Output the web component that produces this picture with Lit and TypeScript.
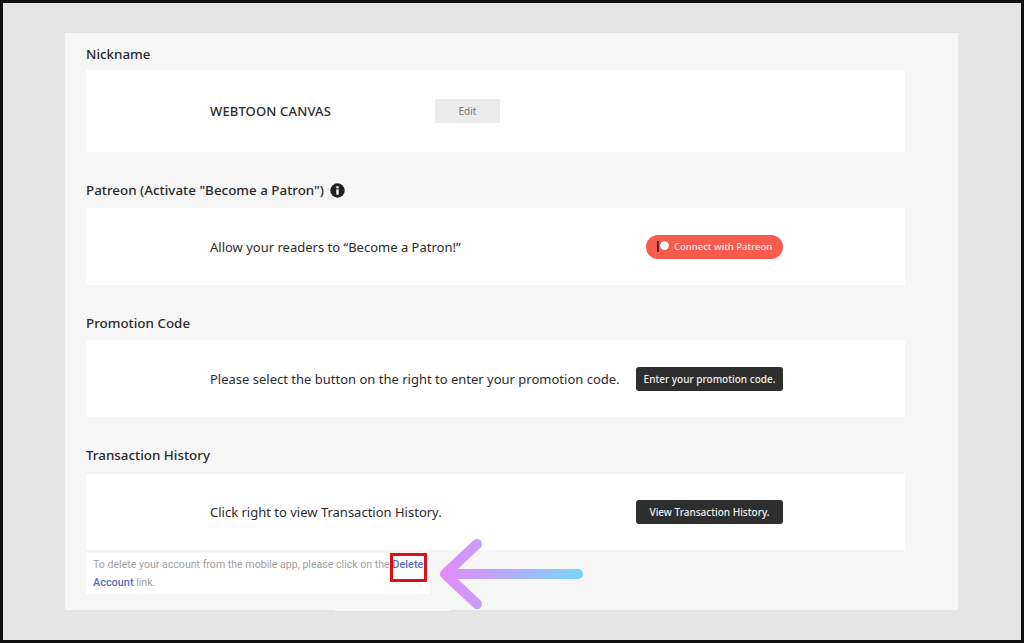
import { LitElement, html, css } from 'lit';
import { customElement } from 'lit/decorators.js';

@customElement('app-root')
export class AppRoot extends LitElement {
  static styles = css`
    :host {
      display: block;
      width: 1024px;
      height: 643px;
      box-sizing: border-box;
      border: 3px solid #111;
      background: #e5e5e5;
      padding: 30px 63px 0 62px;
      font-family: 'Noto Sans', sans-serif;
      color: #2b2b2b;
      position: relative;
      overflow: hidden;
    }

    .panel {
      height: 577px;
      box-sizing: border-box;
      background: #f6f6f6;
      padding: 11px 53px 0 21px;
      position: relative;
    }

    /* faint light strip under the panel */
    .panel::after {
      content: '';
      position: absolute;
      left: 270px;
      bottom: -1px;
      width: 115px;
      height: 2px;
      background: #fafafa;
    }

    h2 {
      margin: 0;
      height: 20px;
      font-size: 13.4px;
      line-height: 20px;
      font-weight: 500;
      color: #2a2a2a;
      display: flex;
      align-items: center;
      gap: 6px;
    }

    .card {
      background: #fff;
      box-sizing: border-box;
      display: flex;
      align-items: center;
      justify-content: space-between;
      padding: 0 122px 0 124px;
      font-size: 13px;
      color: #2c2c2c;
    }

    .nick h2 { margin-bottom: 6px; }
    .nick .card { height: 82px; justify-content: flex-start; gap: 104px; }
    .name { font-weight: 500; letter-spacing: 0.15px; }

    .patreon { margin-top: 28px; }
    .patreon h2 { margin-bottom: 8px; }
    .patreon .card { height: 77px; }

    .promo { margin-top: 28px; }
    .promo h2 { margin-bottom: 7px; }
    .promo .card { height: 77px; }

    .history { margin-top: 28px; }
    .history h2 { margin-bottom: 9px; }
    .history .card { height: 76px; }

    .edit {
      width: 65px;
      height: 24px;
      background: #ebebeb;
      color: #777;
      font-size: 10px;
      display: flex;
      align-items: center;
      justify-content: center;
      border-radius: 1px;
    }

    .dark {
      width: 147px;
      height: 24px;
      background: #2e2e2e;
      color: #f0f0f0;
      font-size: 10px;
      font-weight: 500;
      display: flex;
      align-items: center;
      justify-content: center;
      border-radius: 3px;
    }

    .connect {
      width: 137px;
      height: 24px;
      box-sizing: border-box;
      padding-left: 11px;
      background: #fb5a4f;
      color: #fde9e6;
      font-size: 9.5px;
      font-weight: 500;
      display: flex;
      align-items: center;
      gap: 4px;
      border-radius: 12px;
    }

    .note {
      width: 344px;
      height: 41px;
      box-sizing: border-box;
      margin-top: 3px;
      padding: 3px 0 0 7px;
      background: #fff;
      font-family: Roboto, sans-serif;
      font-size: 10.6px;
      line-height: 18px;
      color: #a0a0a0;
      white-space: nowrap;
    }

    .note b {
      font-size: 10.9px;
      font-weight: 500;
      color: #5570bd;
    }

    .redbox {
      position: absolute;
      left: 387px;
      top: 550px;
      width: 37px;
      height: 29px;
      box-sizing: border-box;
      border: 3px solid #de0f17;
    }

    .arrow {
      position: absolute;
      left: 433px;
      top: 532px;
    }
  `;

  render() {
    return html`
      <div class="panel">
        <section class="nick">
          <h2>Nickname</h2>
          <div class="card">
            <span class="name">WEBTOON CANVAS</span>
            <span class="edit">Edit</span>
          </div>
        </section>

        <section class="patreon">
          <h2>
            Patreon (Activate "Become a Patron")
            <svg width="15" height="15" viewBox="0 0 15 15">
              <circle cx="7.5" cy="7.5" r="7.2" fill="#222" />
              <rect x="6.3" y="6.4" width="2.4" height="5.2" fill="#fff" />
              <circle cx="7.5" cy="4.2" r="1.3" fill="#fff" />
            </svg>
          </h2>
          <div class="card">
            <span>Allow your readers to “Become a Patron!”</span>
            <span class="connect">
              <svg width="13" height="11" viewBox="0 0 13 11">
                <rect x="0" y="0" width="1.8" height="11" fill="#2c2a4a" />
                <circle cx="7.5" cy="4.6" r="4.4" fill="#fff" />
              </svg>
              Connect with Patreon
            </span>
          </div>
        </section>

        <section class="promo">
          <h2>Promotion Code</h2>
          <div class="card">
            <span>Please select the button on the right to enter your promotion code.</span>
            <span class="dark">Enter your promotion code.</span>
          </div>
        </section>

        <section class="history">
          <h2>Transaction History</h2>
          <div class="card">
            <span>Click right to view Transaction History.</span>
            <span class="dark">View Transaction History.</span>
          </div>
        </section>

        <div class="note">
          <div>To delete your account from the mobile app, please click on the <b>Delete</b></div>
          <div><b>Account</b> link.</div>
        </div>
      </div>

      <div class="redbox"></div>

      <svg class="arrow" width="150" height="76" viewBox="0 0 150 76" fill="none">
        <defs>
          <linearGradient id="arrowGrad" gradientUnits="userSpaceOnUse" x1="6" y1="0" x2="146" y2="0">
            <stop offset="0" stop-color="#e58af7" />
            <stop offset="1" stop-color="#7bd4fd" />
          </linearGradient>
        </defs>
        <path
          d="M41 9 L9 39 L41 69 M9 39 H142"
          stroke="url(#arrowGrad)"
          stroke-width="10"
          stroke-linecap="round"
          stroke-linejoin="round"
        />
      </svg>
    `;
  }
}
